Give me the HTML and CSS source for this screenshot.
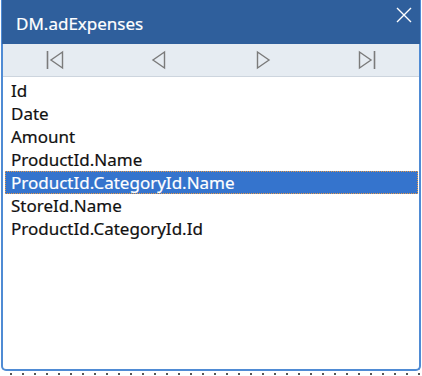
FILE: index.html
```html
<!DOCTYPE html>
<html>
<head>
  <title>DM.adExpenses</title>
  <link rel="stylesheet" href="styles.css">
</head>
<body>
  <div class="window">
    <div class="titlebar">
      <span class="title">DM.adExpenses</span>
      <svg class="close" width="16" height="16" viewBox="0 0 16 16">
        <path d="M1 1 L15 15 M15 1 L1 15" stroke="#fff" stroke-width="1.4" fill="none"/>
      </svg>
    </div>
    <div class="toolbar">
      <div class="nav">
        <svg width="20" height="20" viewBox="0 0 20 20">
          <path d="M2.5 1 V19" stroke="#7b7b7b" stroke-width="1.6" fill="none"/>
          <path d="M17.5 2 L6 10 L17.5 18 Z" stroke="#7b7b7b" stroke-width="1.4" fill="none"/>
        </svg>
      </div>
      <div class="nav">
        <svg width="20" height="20" viewBox="0 0 20 20">
          <path d="M15.5 2 L4 10 L15.5 18 Z" stroke="#7b7b7b" stroke-width="1.4" fill="none"/>
        </svg>
      </div>
      <div class="nav">
        <svg width="20" height="20" viewBox="0 0 20 20">
          <path d="M4.5 2 L16 10 L4.5 18 Z" stroke="#7b7b7b" stroke-width="1.4" fill="none"/>
        </svg>
      </div>
      <div class="nav">
        <svg width="20" height="20" viewBox="0 0 20 20">
          <path d="M2.5 2 L14 10 L2.5 18 Z" stroke="#7b7b7b" stroke-width="1.4" fill="none"/>
          <path d="M17.5 1 V19" stroke="#7b7b7b" stroke-width="1.6" fill="none"/>
        </svg>
      </div>
    </div>
    <ul class="fields">
      <li>Id</li>
      <li>Date</li>
      <li>Amount</li>
      <li>ProductId.Name</li>
      <li class="selected">ProductId.CategoryId.Name</li>
      <li>StoreId.Name</li>
      <li>ProductId.CategoryId.Id</li>
    </ul>
  </div>
  <div class="dots"></div>
</body>
</html>
```

FILE: styles.css
```css
body {
  margin: 0;
  background: #ffffff;
  font-family: "Noto Sans", "Open Sans", sans-serif;
}

.window {
  box-sizing: border-box;
  width: 420px;
  height: 371px;
  margin-left: 1px;
  border: 2px solid #4f8bd4;
  border-top: none;
  border-radius: 0 0 5px 5px;
  display: flex;
  flex-direction: column;
  background: #ffffff;
}

.titlebar {
  height: 44px;
  margin: 0 -1px;
  background: #2f5f9c;
  display: flex;
  align-items: center;
  justify-content: space-between;
  padding: 0 8px 0 14px;
  box-sizing: border-box;
}

.title {
  color: #ffffff;
  font-size: 17px;
  margin-top: 3px;
  -webkit-text-stroke: 0.2px #ffffff;
}

.close {
  align-self: flex-start;
  margin-top: 7px;
}

.toolbar {
  height: 32px;
  background: #e6ecf2;
  border-bottom: 1px solid #cdd5de;
  display: grid;
  grid-template-columns: repeat(4, 1fr);
}

.nav {
  display: flex;
  align-items: center;
  justify-content: center;
}

.fields {
  list-style: none;
  margin: 0;
  padding: 2px 0 0 0;
  font-size: 17px;
  color: #111111;
  -webkit-text-stroke: 0.2px #111111;
}

.fields li {
  margin: 0 1px 0 2px;
  padding-left: 5px;
  border: 1px solid transparent;
  height: 21px;
  line-height: 21px;
}

.fields li.selected {
  background: #3574cd;
  color: #ffffff;
  -webkit-text-stroke: 0.2px #ffffff;
  border: 1px dotted #e59a4a;
}

.dots {
  height: 2px;
  margin: 2px 0 0 10px;
  background: repeating-linear-gradient(to right, #555 0 2px, transparent 2px 12px);
}
```
